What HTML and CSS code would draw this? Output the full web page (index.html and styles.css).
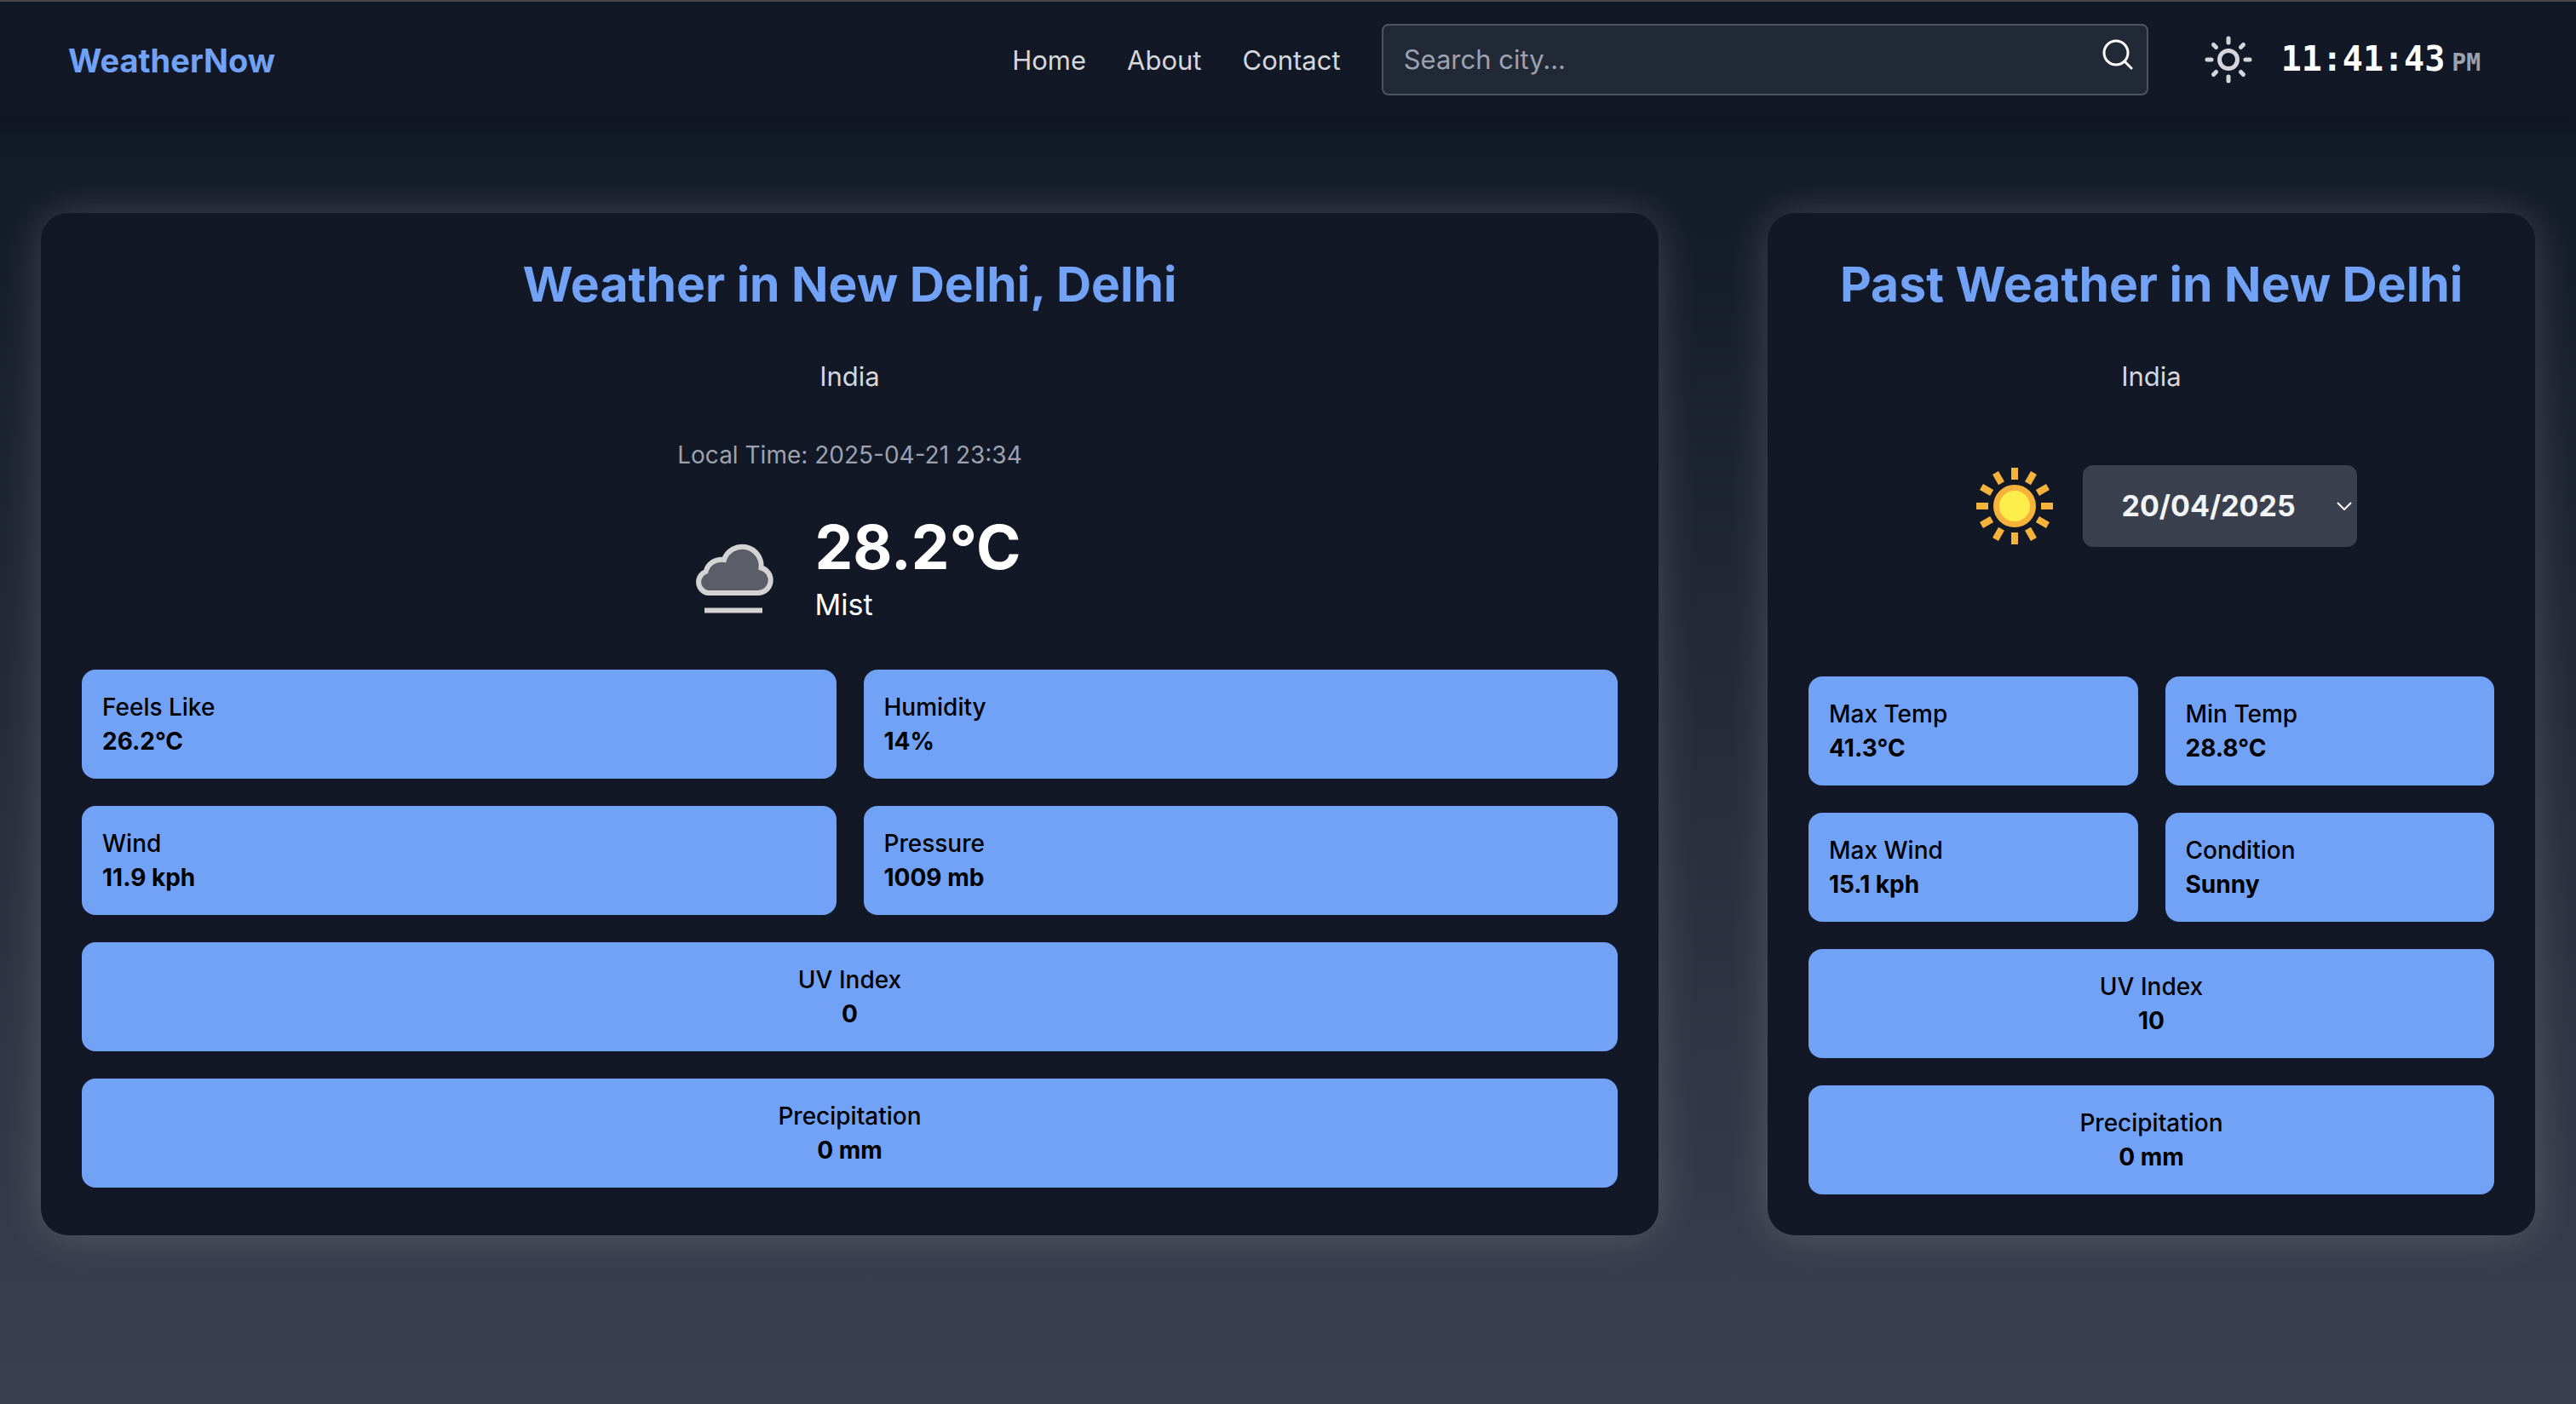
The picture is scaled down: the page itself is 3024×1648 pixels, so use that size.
FILE: index.html
```html
<!DOCTYPE html>
<html lang="en">
<head>
<meta charset="utf-8">
<meta name="viewport" content="width=device-width, initial-scale=1">
<title>WeatherNow</title>
<link rel="stylesheet" href="styles.css">
</head>
<body>
<header class="navbar">
  <a class="brand" href="#">WeatherNow</a>
  <nav class="links" aria-label="Main">
    <a href="#">Home</a>
    <a href="#about">About</a>
    <a href="#contact">Contact</a>
  </nav>
  <form class="search" role="search">
    <input class="search-input" type="text" placeholder="Search city..." aria-label="Search city">
    <button class="search-button" type="button" aria-label="Search">
      <svg width="36" height="36" viewBox="0 0 36 36" fill="none" stroke="currentColor" stroke-width="3" stroke-linecap="round"><circle cx="16" cy="16" r="14"/><path d="M26 26l8 8"/></svg>
    </button>
  </form>
  <button class="theme-button" type="button" aria-label="Toggle theme">
    <svg width="56" height="56" viewBox="0 0 56 56" fill="none" stroke="currentColor" stroke-width="5" stroke-linecap="round"><circle cx="28" cy="28" r="10.5"/><path d="M28 3v5M28 48v5M3 28h5M48 28h5M10.500 10.500l3 3M42.500 42.500l3 3M45.500 10.500l-3 3M13.500 42.500l-3 3"/></svg>
  </button>
  <time class="clock">11:41:43<span class="meridiem">PM</span></time>
</header>

<main class="dashboard">
  <section class="card">
    <h2 class="title">Weather in New Delhi, Delhi</h2>
    <p class="country">India</p>
    <p class="local-time">Local Time: 2025-04-21 23:34</p>
    <div class="now">
      <svg class="weather-icon" viewBox="0 0 128 128" fill="none" stroke="#d3d3d3" stroke-width="6" aria-hidden="true">
        <path fill="#5b5e69" d="M34 90H92A15 15 0 0 0 96.500 60.500A22.400 22.400 0 0 0 53 51A19 19 0 0 0 31.500 65A13 13 0 0 0 34 90Z"/>
        <path d="M30 110.500h68"/>
      </svg>
      <div class="reading">
        <p class="temperature">28.2°C</p>
        <p class="condition">Mist</p>
      </div>
    </div>
    <dl class="stats">
      <div class="stat"><dt>Feels Like</dt><dd>26.2°C</dd></div>
      <div class="stat"><dt>Humidity</dt><dd>14%</dd></div>
      <div class="stat"><dt>Wind</dt><dd>11.9 kph</dd></div>
      <div class="stat"><dt>Pressure</dt><dd>1009 mb</dd></div>
      <div class="stat wide"><dt>UV Index</dt><dd>0</dd></div>
      <div class="stat wide"><dt>Precipitation</dt><dd>0 mm</dd></div>
    </dl>
  </section>

  <section class="card past">
    <h2 class="title">Past Weather in New Delhi</h2>
    <p class="country">India</p>
    <div class="day">
      <svg class="weather-icon" viewBox="0 0 128 128" aria-hidden="true">
        <circle cx="64" cy="64" r="21.500" fill="#fdee4c" stroke="#f5b33c" stroke-width="7"/>
        <g stroke="#f5b33c" stroke-width="8">
          <path id="ray" d="M64 19v14"/>
          <use href="#ray" transform="rotate(30 64 64)"/>
          <use href="#ray" transform="rotate(60 64 64)"/>
          <use href="#ray" transform="rotate(90 64 64)"/>
          <use href="#ray" transform="rotate(120 64 64)"/>
          <use href="#ray" transform="rotate(150 64 64)"/>
          <use href="#ray" transform="rotate(180 64 64)"/>
          <use href="#ray" transform="rotate(210 64 64)"/>
          <use href="#ray" transform="rotate(240 64 64)"/>
          <use href="#ray" transform="rotate(270 64 64)"/>
          <use href="#ray" transform="rotate(300 64 64)"/>
          <use href="#ray" transform="rotate(330 64 64)"/>
        </g>
      </svg>
      <div class="date-picker">
        <select class="date-select" aria-label="Date">
          <option>20/04/2025</option>
        </select>
        <svg class="chevron" width="18" height="10" viewBox="0 0 18 10" fill="none" stroke="currentColor" stroke-width="2" aria-hidden="true"><path d="M1 1l8 8 8-8"/></svg>
      </div>
    </div>
    <dl class="stats">
      <div class="stat"><dt>Max Temp</dt><dd>41.3°C</dd></div>
      <div class="stat"><dt>Min Temp</dt><dd>28.8°C</dd></div>
      <div class="stat"><dt>Max Wind</dt><dd>15.1 kph</dd></div>
      <div class="stat"><dt>Condition</dt><dd>Sunny</dd></div>
      <div class="stat wide"><dt>UV Index</dt><dd>10</dd></div>
      <div class="stat wide"><dt>Precipitation</dt><dd>0 mm</dd></div>
    </dl>
  </section>
</main>
</body>
</html>
```
FILE: styles.css
```css
* {
  box-sizing: border-box;
  margin: 0;
}

body {
  min-height: 100vh;
  font-family: Inter, "Liberation Sans", sans-serif;
  font-size: 31px;
  line-height: 48px;
  color: #fff;
  background: linear-gradient(#121926 138px, #3a404f);
}

a {
  color: inherit;
  text-decoration: none;
}

button {
  padding: 0;
  border: 0;
  background: none;
  color: inherit;
  cursor: pointer;
}

svg {
  display: block;
}

/* Navigation bar */
.navbar {
  display: flex;
  align-items: center;
  height: 138px;
  padding: 0 112px 0 80px;
  border-top: 2px solid #464944;
  background: #121826;
  box-shadow: 0 8px 12px -2px rgba(0, 0, 0, 0.1), 0 4px 8px -4px rgba(0, 0, 0, 0.1);
}

.brand,
.links,
.clock {
  padding-top: 2px;
}

.brand {
  font-size: 38px;
  font-weight: 700;
  color: #71a2f6;
}

.links {
  display: flex;
  gap: 48px;
  margin: 0 48px 0 auto;
  color: #d5d7db;
}

.search {
  display: flex;
  align-items: center;
  flex: 0 1 900px;
  height: 84px;
  margin-right: 66px;
  padding: 0 16px 0 24px;
  border: 2px solid #4d5461;
  border-radius: 8px;
  background: #222936;
}

.search-input {
  flex: 1;
  min-width: 0;
  padding: 0;
  border: 0;
  outline: 0;
  background: none;
  font: inherit;
  color: #fff;
}

.search-input::placeholder {
  color: #9ca2af;
  opacity: 1;
}

.search-button {
  padding-bottom: 12px;
}

.theme-button {
  margin-right: 34px;
  color: #d3d5db;
}

.clock {
  display: flex;
  align-items: baseline;
  gap: 8px;
  font: 700 40px/48px "DejaVu Sans Mono", monospace;
}

.meridiem {
  font-size: 28px;
  color: #9ca2af;
}

/* Cards */
.dashboard {
  display: grid;
  grid-template-columns: minmax(0, 1899fr) minmax(0, 901fr);
  gap: 128px;
  padding: 112px 48px;
}

.card {
  display: flex;
  flex-direction: column;
  min-height: 1200px;
  padding: 48px;
  border-radius: 32px;
  background: #121826;
  box-shadow: 0 0 50px rgba(255, 255, 255, 0.18);
  text-align: center;
}

.title {
  font-size: 57px;
  font-weight: 700;
  line-height: 72px;
  color: #71a2f6;
}

.country {
  margin-top: 48px;
  color: #d5d7db;
}

.local-time {
  margin-top: 48px;
  font-size: 28px;
  line-height: 40px;
  color: #9ca2af;
}

.now {
  display: flex;
  justify-content: center;
  align-items: center;
  gap: 32px;
  margin: 48px 0;
  text-align: left;
}

.weather-icon {
  width: 128px;
  height: 128px;
}

.temperature {
  font-size: 71px;
  font-weight: 700;
  line-height: 80px;
}

.condition {
  font-size: 34px;
  line-height: 56px;
}

.day {
  display: flex;
  justify-content: center;
  align-items: center;
  gap: 16px;
  margin-top: 64px;
  padding-left: 16px;
}

.date-picker {
  position: relative;
}

.date-select {
  width: 322px;
  height: 96px;
  padding: 0 46px;
  border: 0;
  border-radius: 12px;
  appearance: none;
  background: #3b404f;
  font: inherit;
  font-size: 34px;
  font-weight: 700;
  color: #f3f4f6;
}

.chevron {
  position: absolute;
  top: 43px;
  right: 6px;
  pointer-events: none;
}

.past .stats {
  margin-top: auto;
}

.stats {
  display: grid;
  grid-template-columns: 1fr 1fr;
  gap: 32px;
}

.stat {
  padding: 24px;
  border-radius: 16px;
  background: #71a2f6;
  font-size: 28px;
  line-height: 40px;
  text-align: left;
  color: #000;
}

.stat dt {
  font-weight: 500;
}

.stat dd {
  font-weight: 700;
}

.wide {
  grid-column: 1 / -1;
  text-align: center;
}
```
